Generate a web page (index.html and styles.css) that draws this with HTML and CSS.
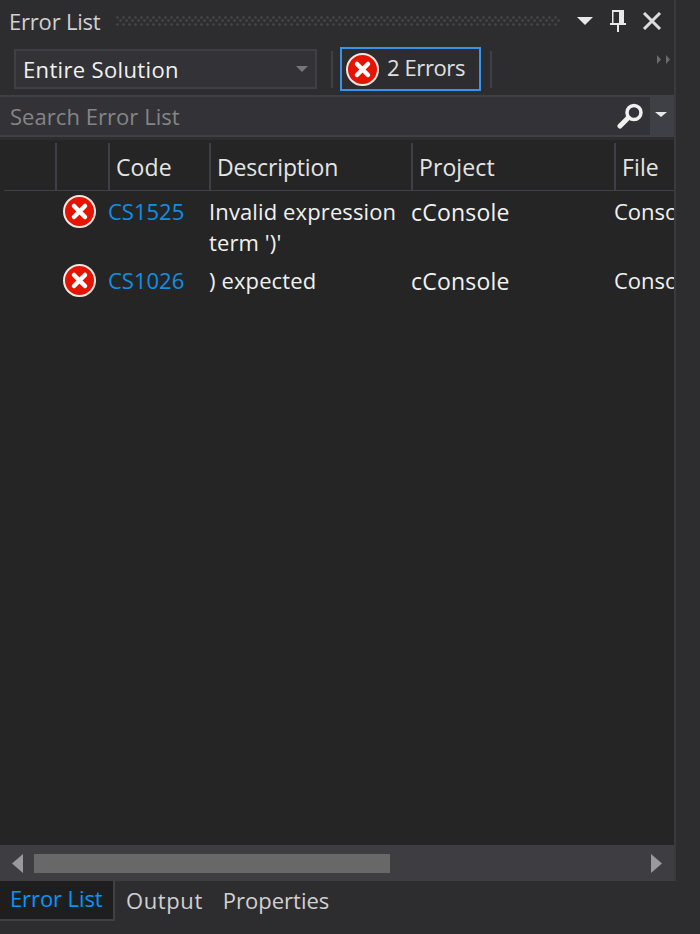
FILE: index.html
```html
<!DOCTYPE html>
<html lang="en">
<head>
<meta charset="utf-8">
<title>Error List</title>
<link rel="stylesheet" href="styles.css">
</head>
<body>
<div class="panel">
  <header class="title-bar">
    <span class="title">Error List</span>
    <span class="grip"></span>
    <svg class="ic-menu" width="16" height="8" viewBox="0 0 16 8"><path d="M0 0H16L8 8Z" fill="#e8e8e8"/></svg>
    <svg class="ic-pin" width="16" height="24" viewBox="0 0 16 24"><path fill-rule="evenodd" d="M2 1H14V14H16V16H9V23H7V16H0V14H2ZM3.500 3V14H9V3Z" fill="#e8e8e8"/></svg>
    <svg class="ic-close" width="20" height="18" viewBox="0 0 20 18"><path d="M2 1L18 17M18 1L2 17" fill="none" stroke="#dcdcdc" stroke-width="3"/></svg>
  </header>

  <div class="toolbar">
    <div class="combo">
      <span>Entire Solution</span>
      <svg width="12" height="6" viewBox="0 0 12 6"><path d="M0 0H12L6 6Z" fill="#77777a"/></svg>
    </div>
    <span class="sep"></span>
    <div class="errors-btn">
      <svg class="err-icon" width="33" height="33" viewBox="0 0 33 33"><circle cx="16.500" cy="16.500" r="15.500" fill="#e51400" stroke="#f2e6e4" stroke-width="2"/><path d="M11 11L22 22M22 11L11 22" stroke="#fff" stroke-width="4.500" stroke-linecap="round"/></svg>
      <span class="errors-label">2 Errors</span>
    </div>
    <span class="sep sep-b"></span>
    <svg class="overflow" width="13" height="9" viewBox="0 0 13 9"><path d="M0 0L4 4.500L0 9ZM9 0L13 4.500L9 9Z" fill="#6b6b6e"/></svg>
  </div>

  <div class="search">
    <span class="search-text">Search Error List</span>
    <svg class="ic-search" width="27" height="26" viewBox="0 0 27 26"><circle cx="17" cy="9.500" r="7" fill="none" stroke="#f0f0f0" stroke-width="3.500"/><path d="M11 15L3 23" stroke="#f0f0f0" stroke-width="5" stroke-linecap="round"/></svg>
    <span class="search-drop"><svg width="12" height="5" viewBox="0 0 12 5"><path d="M0 0H12L6 5Z" fill="#e8e8e8"/></svg></span>
  </div>

  <div class="list">
    <div class="row head">
      <div class="cell"></div>
      <div class="cell"></div>
      <div class="cell">Code</div>
      <div class="cell head-desc">Description</div>
      <div class="cell">Project</div>
      <div class="cell">File</div>
    </div>
    <div class="row item item-a">
      <div class="cell"></div>
      <div class="cell icon-cell"><svg class="err-icon" width="33" height="33" viewBox="0 0 33 33"><circle cx="16.500" cy="16.500" r="15.500" fill="#e51400" stroke="#f2e6e4" stroke-width="2"/><path d="M11 11L22 22M22 11L11 22" stroke="#fff" stroke-width="4.500" stroke-linecap="round"/></svg></div>
      <div class="cell link">CS1525</div>
      <div class="cell desc">Invalid expression term ')'</div>
      <div class="cell project">cConsole</div>
      <div class="cell clip">Console</div>
    </div>
    <div class="row item item-b">
      <div class="cell"></div>
      <div class="cell icon-cell"><svg class="err-icon" width="33" height="33" viewBox="0 0 33 33"><circle cx="16.500" cy="16.500" r="15.500" fill="#e51400" stroke="#f2e6e4" stroke-width="2"/><path d="M11 11L22 22M22 11L11 22" stroke="#fff" stroke-width="4.500" stroke-linecap="round"/></svg></div>
      <div class="cell link">CS1026</div>
      <div class="cell desc">) expected</div>
      <div class="cell project">cConsole</div>
      <div class="cell clip">Console</div>
    </div>
  </div>

  <div class="hscroll">
    <svg width="11" height="19" viewBox="0 0 11 19"><path d="M11 0V19L0 9.500Z" fill="#9a9a9c"/></svg>
    <span class="thumb"></span>
    <svg width="11" height="19" viewBox="0 0 11 19"><path d="M0 0V19L11 9.500Z" fill="#9a9a9c"/></svg>
  </div>
</div>

<nav class="tabs">
  <span class="tab active">Error List</span>
  <span class="tab output">Output</span>
  <span class="tab">Properties</span>
</nav>
</body>
</html>
```
FILE: styles.css
```css
* { box-sizing: border-box; }
html, body { margin: 0; height: 934px; overflow: hidden; }
body {
  background: #2d2d30;
  color: #f1f1f1;
  font-family: "Open Sans", "Noto Sans", sans-serif;
  font-size: 22px;
}
.panel {
  width: 676px;
  height: 881px;
  border-right: 2px solid #3a3a3e;
  display: flex;
  flex-direction: column;
}
.title-bar {
  height: 45px;
  display: flex;
  align-items: center;
  padding: 0 12px 3px 9px;
}
.title { color: #d0d0d0; width: 107px; flex: none; letter-spacing: -0.2px; }
.grip {
  flex: none;
  width: 444px;
  height: 10px;
  background-image:
    radial-gradient(circle at 1.500px 1.500px, #434347 1.200px, transparent 1.500px),
    radial-gradient(circle at 4.500px 4.500px, #434347 1.200px, transparent 1.500px);
  background-size: 6px 7px;
}
.ic-menu { margin-left: 17px; flex: none; }
.ic-pin { margin-left: 17px; flex: none; }
.ic-close { margin-left: 16px; flex: none; }

.toolbar {
  height: 50px;
  display: flex;
  align-items: center;
  padding: 0 4px 2px 14px;
}
.combo {
  width: 303px;
  height: 40px;
  border: 2px solid #3f3f46;
  background: #333337;
  display: flex;
  align-items: center;
  justify-content: space-between;
  padding: 0 7px 0 7px;
  letter-spacing: 0.35px;
}
.sep { width: 2px; height: 37px; background: #3f3f46; margin: 0 7px 0 14px; flex: none; }
.sep-b { margin: 0 0 0 9px; }
.errors-btn {
  width: 141px;
  height: 44px;
  border: 2px solid #3794ea;
  display: flex;
  align-items: center;
  gap: 8px;
  padding-left: 4px;
  color: #e0e0e0;
}
.errors-label { letter-spacing: -0.4px; padding-bottom: 4px; }
.overflow { margin: 0 0 20px auto; }

.search {
  height: 42px;
  background: #333337;
  border-top: 2px solid #3f3f46;
  border-bottom: 2px solid #3f3f46;
  display: flex;
  align-items: center;
}
.search-text { color: #858585; margin-left: 10px; letter-spacing: 0.05px; }
.ic-search { margin-left: auto; margin-right: -1px; }
.search-drop {
  width: 24px;
  height: 100%;
  margin-left: 7px;
  padding: 0 3px 4px 0;
  background: #3f3f46;
  display: flex;
  align-items: center;
  justify-content: center;
}

.list {
  flex: 1;
  margin-top: 3px;
  background: #252526;
  overflow: hidden;
}
.row {
  display: grid;
  grid-template-columns: 55px 53px 101px 202px 203px 60px;
  width: 674px;
}
.head {
  height: 51px;
  padding-top: 3px;
  color: #e4e4e4;
  font-size: 23px;
  letter-spacing: 0.1px;
  background: linear-gradient(#3f3f46, #3f3f46) 4px 50px / 670px 2px no-repeat;
}
.head .cell {
  height: 47px;
  border-left: 2px solid #3f3f46;
  padding-left: 6px;
  display: flex;
  align-items: center;
  padding-bottom: 0;
}
.head .cell:first-child { border-left: 0; }
.head .head-desc { letter-spacing: -0.15px; }
.cell { min-width: 0; }
.item { line-height: 31px; }
.item-a { padding-top: 5px; height: 69px; }
.item-b { padding-top: 5px; }
.item .cell { padding-right: 4px; }
.icon-cell { padding: 0 0 0 8px; }
.icon-cell svg { display: block; margin-top: -1px; }
.link { color: #0f8fe6; }
.desc { letter-spacing: 0.12px; }
.project { font-size: 23px; letter-spacing: 0.2px; padding-top: 1px; }
.clip { overflow: hidden; white-space: nowrap; padding-right: 0 !important; }

.hscroll {
  height: 36px;
  background: #3e3e42;
  display: flex;
  align-items: center;
  padding: 0 12px 0 12px;
  flex: none;
}
.hscroll svg { flex: none; }
.thumb { width: 356px; height: 19px; background: #686868; margin: 0 auto 0 11px; }

.tabs {
  height: 40px;
  display: flex;
  align-items: stretch;
}
.tab { padding: 0 0 2px 0; display: flex; align-items: center; color: #d0d0d0; }
.tab.output { margin: 0 20px 0 11px; letter-spacing: 0.6px; }
.tab.active {
  width: 115px;
  padding: 0 0 4px 10px;
  background: #1e1e1e;
  border-right: 2px solid #3f3f46;
  border-bottom: 2px solid #3f3f46;
  color: #0097fb;
  letter-spacing: -0.1px;
}
```
